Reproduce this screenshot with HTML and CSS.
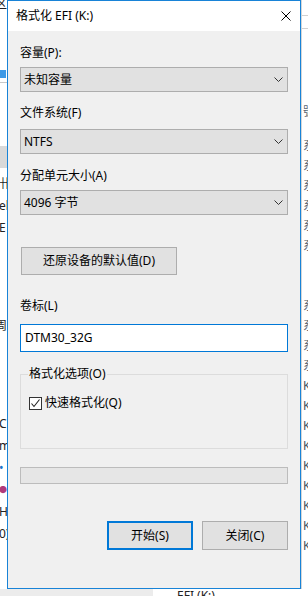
FILE: index.html
```html
<!DOCTYPE html>
<html lang="zh-CN">
<head>
    <meta charset="UTF-8">
    <meta name="viewport" content="width=device-width, initial-scale=1.0">
    <title>格式化 EFI (K:)</title>
    <link rel="stylesheet" href="styles.css">
</head>
<body>

<div class="screen">
    <!-- 背景窗口（左侧露出的部分） -->
    <div class="backdrop backdrop-left">
        <span class="bg-text top-glyph">区</span>
        <span class="bg-icon"></span>
        <span class="bg-rule"></span>
        <span class="bg-band"></span>
        <span class="bg-text">卄</span>
        <span class="bg-text">el</span>
        <span class="bg-text">E</span>
        <span class="bg-text far">周</span>
        <span class="bg-text far2">C</span>
        <span class="bg-text">m</span>
        <span class="bg-text dot-orange">•</span>
        <span class="bg-text dot-red">●</span>
        <span class="bg-text">H:</span>
        <span class="bg-text">0)</span>
    </div>

    <!-- 格式化对话框 -->
    <div class="dialog">
        <div class="titlebar">
            <span class="title">格式化 EFI (K:)</span>
            <svg class="close" width="10" height="10" viewBox="0 0 10 10">
                <path d="M0.5 0.5 L9.5 9.5 M9.5 0.5 L0.5 9.5" stroke="#000" stroke-width="1" fill="none"/>
            </svg>
        </div>

        <div class="content">
            <label class="field-label">容量(P):</label>
            <div class="combo combo-first">
                <span>未知容量</span>
                <svg class="chevron" width="9" height="5" viewBox="0 0 9 5">
                    <path d="M0.5 0.5 L4.5 4.5 L8.5 0.5" stroke="#333" stroke-width="1" fill="none"/>
                </svg>
            </div>

            <label class="field-label label-fs">文件系统(F)</label>
            <div class="combo combo-fs">
                <span>NTFS</span>
                <svg class="chevron" width="9" height="5" viewBox="0 0 9 5">
                    <path d="M0.5 0.5 L4.5 4.5 L8.5 0.5" stroke="#333" stroke-width="1" fill="none"/>
                </svg>
            </div>

            <label class="field-label label-unit">分配单元大小(A)</label>
            <div class="combo combo-unit">
                <span>4096 字节</span>
                <svg class="chevron" width="9" height="5" viewBox="0 0 9 5">
                    <path d="M0.5 0.5 L4.5 4.5 L8.5 0.5" stroke="#333" stroke-width="1" fill="none"/>
                </svg>
            </div>

            <button class="btn btn-restore">还原设备的默认值(D)</button>

            <label class="field-label label-volume">卷标(L)</label>
            <div class="textbox">DTM30_32G</div>

            <fieldset class="group">
                <legend>格式化选项(O)</legend>
                <div class="check-row">
                    <span class="checkbox">
                        <svg width="11" height="11" viewBox="0 0 11 11">
                            <path d="M1.5 5.5 L4 8.5 L9.5 1.5" stroke="#222" stroke-width="1.1" fill="none"/>
                        </svg>
                    </span>
                    <span class="check-label">快速格式化(Q)</span>
                </div>
            </fieldset>

            <div class="progress"></div>

            <div class="actions">
                <button class="btn btn-action btn-default">开始(S)</button>
                <button class="btn btn-action">关闭(C)</button>
            </div>
        </div>
    </div>

    <!-- 背景窗口（右侧露出的部分） -->
    <div class="backdrop backdrop-right">
        <span class="bg-line line-a"></span>
        <span class="bg-line line-b"></span>
        <span class="bg-text rt first-rt">號</span>
        <span class="bg-text rt gap-rt">系</span>
        <span class="bg-text rt">系</span>
        <span class="bg-text rt">系</span>
        <span class="bg-text rt">系</span>
        <span class="bg-text rt">系</span>
        <span class="bg-text rt">系</span>
        <span class="bg-text rt gap-rt2">系</span>
        <span class="bg-text rt">系</span>
        <span class="bg-text rt">系</span>
        <span class="bg-text rt">系</span>
        <span class="bg-text rt kk">K</span>
        <span class="bg-text rt kk">K</span>
        <span class="bg-text rt kk">K</span>
        <span class="bg-text rt kk">K</span>
        <span class="bg-text rt kk">K</span>
        <span class="bg-text rt kk">K</span>
        <span class="bg-text rt kk">K</span>
        <span class="bg-text rt kk">K</span>
        <span class="bg-text rt kk">K</span>
    </div>
</div>

<div class="bottom-strip">
    <span class="strip-gray"></span>
    <span class="strip-text">EFI (K:)</span>
</div>

</body>
</html>
```

FILE: styles.css
```css
body {
    margin: 0;
    width: 308px;
    height: 596px;
    overflow: hidden;
    background-color: #fff;
    font-family: "Noto Sans", "Noto Sans CJK SC", sans-serif;
    font-size: 12px;
    line-height: 16px;
    color: #000;
}
.screen {
    display: grid;
    grid-template-columns: 7px 294px 7px;
    height: 589px;
}

/* 背景窗口 */
.backdrop {
    display: flex;
    flex-direction: column;
    overflow: hidden;
    background-color: #fff;
}
.bg-text {
    display: block;
    height: 12px;
    line-height: 12px;
    font-size: 12px;
    color: #222;
    white-space: nowrap;
    margin-top: 10px;
}
.backdrop-left .bg-text {
    margin-left: -1px;
}
.backdrop-left .top-glyph {
    margin-top: -2px;
    margin-left: -5px;
}
.bg-icon {
    display: block;
    width: 6px;
    height: 8px;
    margin-top: 60px;
    background-color: #3d99e6;
}
.bg-rule {
    display: block;
    height: 1px;
    margin-top: 4px;
    background-color: #c8c8c8;
}
.bg-band {
    display: block;
    height: 22px;
    margin-top: 63px;
    background-color: #d9d9d9;
}
.backdrop-left .far {
    margin-top: 86px;
    margin-left: -5px;
}
.backdrop-left .far2 {
    margin-top: 86px;
}
.dot-orange {
    color: #1a73c9;
}
.dot-red {
    font-size: 8px;
    color: #b03a7a;
}

.backdrop-right {
    border-left: 1px solid #d6d6d6;
}
.bg-line {
    display: block;
    height: 1px;
    background-color: #d0d0d0;
}
.line-a {
    margin-top: 15px;
}
.line-b {
    margin-top: 12px;
}
.backdrop-right .rt {
    margin-top: 8px;
    margin-left: 1px;
    color: #5a6470;
}
.backdrop-right .first-rt {
    margin-top: 77px;
}
.backdrop-right .gap-rt {
    margin-top: 22px;
}
.backdrop-right .gap-rt2 {
    margin-top: 48px;
}
.backdrop-right .kk {
    color: #4c5560;
}

/* 对话框 */
.dialog {
    display: flex;
    flex-direction: column;
    border: 1px solid #1883d7;
    background-color: #f0f0f0;
}
.titlebar {
    display: flex;
    align-items: center;
    justify-content: space-between;
    height: 30px;
    padding: 0 9px 0 8px;
    background-color: #fff;
}
.close {
    display: block;
}
.content {
    display: flex;
    flex-direction: column;
    padding: 14px 12px 0;
}
.field-label {
    display: block;
    height: 16px;
}
.combo {
    box-sizing: border-box;
    display: flex;
    align-items: center;
    justify-content: space-between;
    height: 25px;
    padding: 0 4px 0 3px;
    border: 1px solid #adadad;
    background-color: #e1e1e1;
}
.chevron {
    display: block;
}
.combo-first {
    margin-top: 6px;
}
.label-fs {
    margin-top: 13px;
}
.combo-fs {
    margin-top: 8px;
}
.label-unit {
    margin-top: 14px;
}
.combo-unit {
    margin-top: 6px;
}
.btn {
    box-sizing: border-box;
    padding: 0;
    border: 1px solid #adadad;
    background-color: #e1e1e1;
    font-family: inherit;
    font-size: 12px;
    line-height: 16px;
    color: #000;
}
.btn-restore {
    align-self: flex-start;
    width: 156px;
    height: 28px;
    margin: 32px 0 0 1px;
}
.label-volume {
    margin-top: 23px;
}
.textbox {
    box-sizing: border-box;
    height: 28px;
    margin-top: 10px;
    padding: 5px 4px;
    border: 1px solid #0078d7;
    background-color: #fff;
}
.group {
    margin: 14px 0 0;
    padding: 13px 0 37px 8px;
    border: 1px solid #dcdcdc;
    min-inline-size: 0;
}
.group legend {
    margin-left: -1px;
    padding: 0 1px;
    line-height: 16px;
}
.check-row {
    display: flex;
    align-items: center;
    height: 16px;
}
.checkbox {
    box-sizing: border-box;
    display: flex;
    align-items: center;
    justify-content: center;
    width: 13px;
    height: 13px;
    border: 1px solid #333;
    background-color: #fff;
}
.checkbox svg {
    display: block;
}
.check-label {
    margin-left: 3px;
}
.progress {
    box-sizing: border-box;
    height: 17px;
    margin-top: 18px;
    border: 1px solid #bcbcbc;
    background-color: #e6e6e6;
}
.actions {
    display: flex;
    justify-content: flex-end;
    gap: 9px;
    margin-top: 37px;
}
.btn-action {
    width: 86px;
    height: 29px;
}
.btn-default {
    border: 2px solid #0078d7;
}

/* 底部背景 */
.bottom-strip {
    display: flex;
    height: 7px;
    overflow: hidden;
}
.strip-gray {
    width: 153px;
    background-color: #ececec;
}
.strip-text {
    margin: 1px 0 0 24px;
    line-height: 12px;
    color: #222;
}
```
